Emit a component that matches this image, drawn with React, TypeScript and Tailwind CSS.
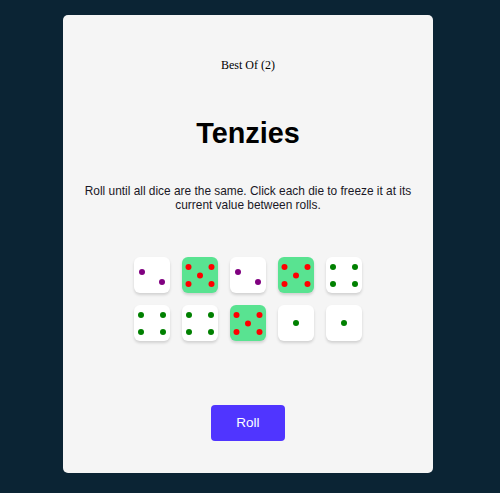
import React from 'react';

type Die = { value: number; held: boolean };

const dice: Die[] = [
  { value: 2, held: false },
  { value: 5, held: true },
  { value: 2, held: false },
  { value: 5, held: true },
  { value: 4, held: false },
  { value: 4, held: false },
  { value: 4, held: false },
  { value: 5, held: true },
  { value: 1, held: false },
  { value: 1, held: false },
];

// pip centres inside a 36x36 face
const pips: Record<number, [number, number][]> = {
  1: [[18, 18]],
  2: [
    [8, 15],
    [28, 25],
  ],
  4: [
    [7, 10],
    [29, 10],
    [7, 27],
    [29, 27],
  ],
  5: [
    [6.5, 10],
    [29.5, 10],
    [18, 18.5],
    [6.5, 27],
    [29.5, 27],
  ],
};

const pipColor = (value: number): string => {
  if (value === 5) return '#ff0000';
  if (value === 2) return '#800080';
  return '#008000';
};

const DieFace = ({ die }: { die: Die }): React.ReactElement => {
  return (
    <button
      className={
        'w-[36px] h-[36px] rounded-[6px] shadow-[0_2px_3px_rgba(0,0,0,0.15)] ' +
        (die.held ? 'bg-[#59e391]' : 'bg-white')
      }
    >
      <svg width="36" height="36" viewBox="0 0 36 36">
        {pips[die.value].map(([cx, cy], i) => (
          <circle key={i} cx={cx} cy={cy} r="3" fill={pipColor(die.value)} />
        ))}
      </svg>
    </button>
  );
};

const App = (): React.ReactElement => {
  return (
    <div className="h-[493px] bg-[#0b2434] flex justify-center pr-[4px] pt-[15px]">
      <main className="w-[370px] h-[458px] bg-[#f5f5f5] rounded-[5px] flex flex-col items-center pt-[43px] px-[20px]">
        <p className="font-['Liberation_Serif',serif] text-[12px] leading-[14px] text-black">
          Best Of (2)
        </p>
        <h1 className="mt-[45px] font-['Liberation_Sans',Arial,sans-serif] font-bold text-[28.8px] leading-[33px] text-black">
          Tenzies
        </h1>
        <p className="mt-[34px] font-['Liberation_Sans',Arial,sans-serif] text-[11.9px] leading-[14px] text-center text-[#1a1826]">
          Roll until all dice are the same. Click each die to freeze it at its current value between
          rolls.
        </p>
        <div className="mt-[45px] grid grid-cols-5 gap-[12px]">
          {dice.map((die, i) => (
            <DieFace key={i} die={die} />
          ))}
        </div>
        <button className="mt-[64px] w-[74px] h-[36px] rounded-[4px] bg-[#5035ff] text-white font-['Liberation_Sans',Arial,sans-serif] text-[13.5px]">
          Roll
        </button>
      </main>
    </div>
  );
};

export default App;
